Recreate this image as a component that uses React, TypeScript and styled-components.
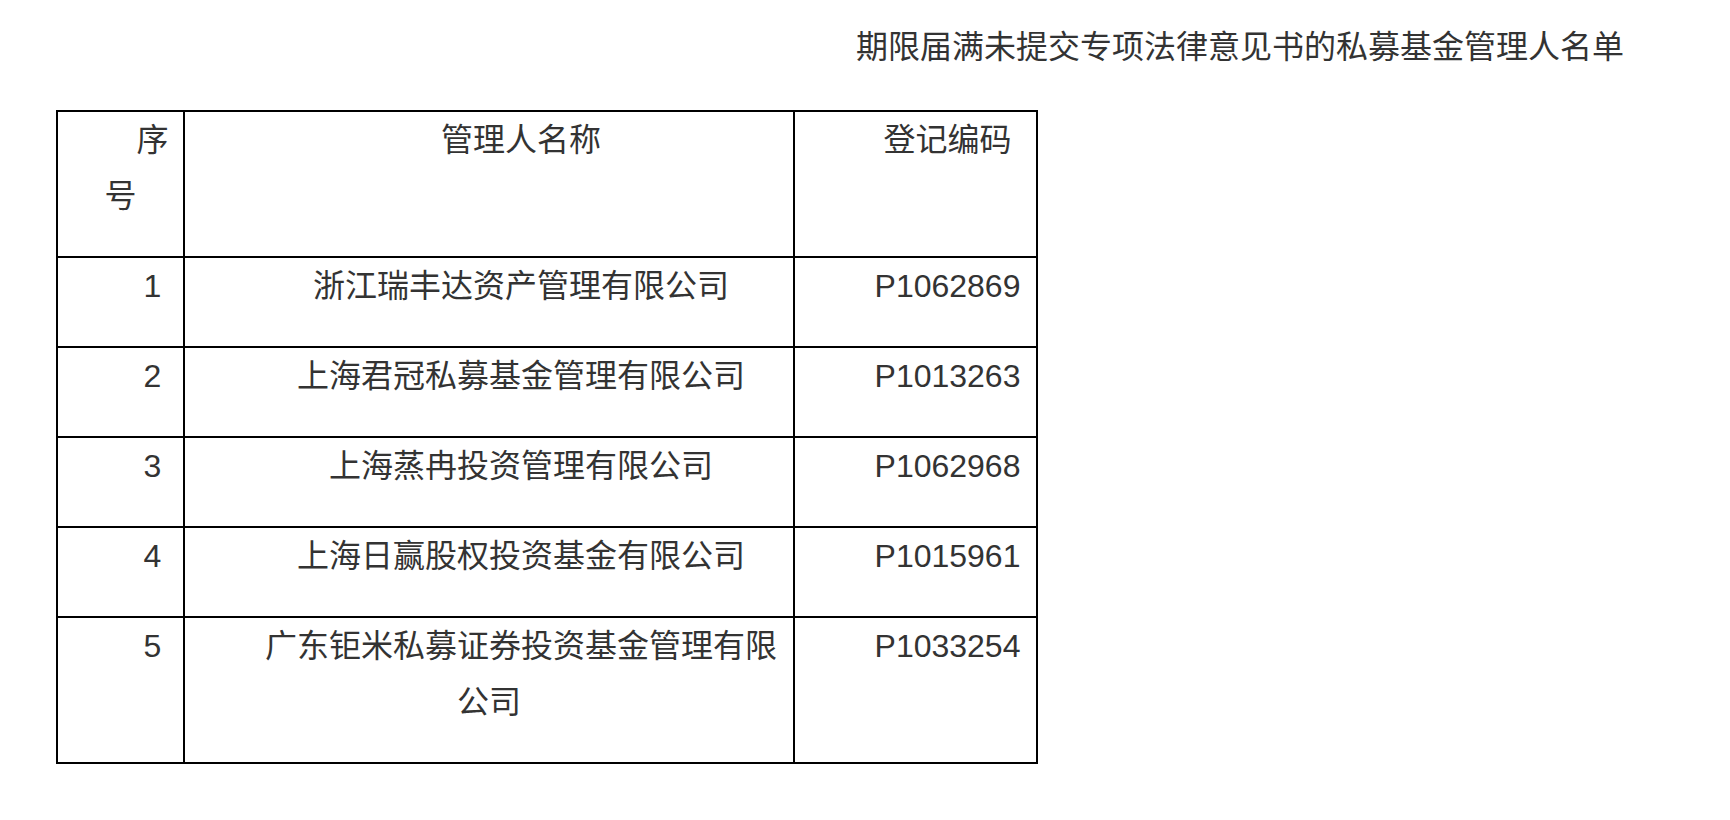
import React from "react";
import styled, { createGlobalStyle } from "styled-components";

const GlobalStyle = createGlobalStyle`
  html, body {
    margin: 0;
    padding: 0;
    background: #ffffff;
  }
  body {
    font-family: "Liberation Sans", "Noto Sans CJK SC", sans-serif;
    color: #333333;
  }
`;

const Page = styled.div`
  width: 1730px;
  min-height: 820px;
  box-sizing: border-box;
  padding: 19px 0 0 56px;
`;

const Title = styled.p`
  margin: 0 0 35px 0;
  padding-right: 106px;
  font-size: 32px;
  line-height: 56px;
  text-align: right;
  color: #333333;
`;

const Table = styled.table`
  border-collapse: collapse;
  table-layout: fixed;
  width: 980px;
`;

const Cell = styled.td`
  border: 2px solid #000000;
  padding: 0 5px;
  vertical-align: top;
`;

const CellText = styled.p`
  margin: 0 0 32px 0;
  font-size: 32px;
  line-height: 56px;
  text-indent: 2em;
  text-align: center;
  color: #333333;
`;

type Manager = {
  no: string;
  name: string;
  code: string;
};

const managers: Manager[] = [
  { no: "1", name: "浙江瑞丰达资产管理有限公司", code: "P1062869" },
  { no: "2", name: "上海君冠私募基金管理有限公司", code: "P1013263" },
  { no: "3", name: "上海蒸冉投资管理有限公司", code: "P1062968" },
  { no: "4", name: "上海日赢股权投资基金有限公司", code: "P1015961" },
  { no: "5", name: "广东钜米私募证券投资基金管理有限公司", code: "P1033254" },
];

const App: React.FC = () => {
  return (
    <>
      <GlobalStyle />
      <Page>
        <Title>期限届满未提交专项法律意见书的私募基金管理人名单</Title>
        <Table>
          <colgroup>
            <col style={{ width: 127 }} />
            <col style={{ width: 610 }} />
            <col style={{ width: 243 }} />
          </colgroup>
          <tbody>
            <tr>
              <Cell>
                <CellText>序号</CellText>
              </Cell>
              <Cell>
                <CellText>管理人名称</CellText>
              </Cell>
              <Cell>
                <CellText>登记编码</CellText>
              </Cell>
            </tr>
            {managers.map(m => (
              <tr key={m.no}>
                <Cell>
                  <CellText>{m.no}</CellText>
                </Cell>
                <Cell>
                  <CellText>{m.name}</CellText>
                </Cell>
                <Cell>
                  <CellText>{m.code}</CellText>
                </Cell>
              </tr>
            ))}
          </tbody>
        </Table>
      </Page>
    </>
  );
};

export default App;
